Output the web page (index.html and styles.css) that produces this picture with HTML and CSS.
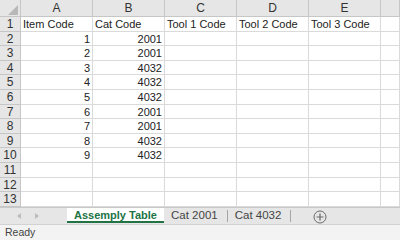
FILE: index.html
```html
<!DOCTYPE html>
<html lang="en">
<head>
  <meta charset="UTF-8" />
  <title>Assemply Table</title>
  <link rel="stylesheet" href="styles.css">
</head>
<body>
  <div class="sheet">
    <div class="cell corner"><span class="corner-mark"></span></div>
    <div class="cell col-head">A</div>
    <div class="cell col-head">B</div>
    <div class="cell col-head">C</div>
    <div class="cell col-head">D</div>
    <div class="cell col-head">E</div>
    <div class="cell col-head"></div>

    <div class="cell row-head">1</div>
    <div class="cell">Item Code</div>
    <div class="cell">Cat Code</div>
    <div class="cell">Tool 1 Code</div>
    <div class="cell">Tool 2 Code</div>
    <div class="cell">Tool 3 Code</div>
    <div class="cell"></div>

    <div class="cell row-head">2</div><div class="cell num">1</div><div class="cell num">2001</div><div class="cell"></div><div class="cell"></div><div class="cell"></div><div class="cell"></div>
    <div class="cell row-head">3</div><div class="cell num">2</div><div class="cell num">2001</div><div class="cell"></div><div class="cell"></div><div class="cell"></div><div class="cell"></div>
    <div class="cell row-head">4</div><div class="cell num">3</div><div class="cell num">4032</div><div class="cell"></div><div class="cell"></div><div class="cell"></div><div class="cell"></div>
    <div class="cell row-head">5</div><div class="cell num">4</div><div class="cell num">4032</div><div class="cell"></div><div class="cell"></div><div class="cell"></div><div class="cell"></div>
    <div class="cell row-head">6</div><div class="cell num">5</div><div class="cell num">4032</div><div class="cell"></div><div class="cell"></div><div class="cell"></div><div class="cell"></div>
    <div class="cell row-head">7</div><div class="cell num">6</div><div class="cell num">2001</div><div class="cell"></div><div class="cell"></div><div class="cell"></div><div class="cell"></div>
    <div class="cell row-head">8</div><div class="cell num">7</div><div class="cell num">2001</div><div class="cell"></div><div class="cell"></div><div class="cell"></div><div class="cell"></div>
    <div class="cell row-head">9</div><div class="cell num">8</div><div class="cell num">4032</div><div class="cell"></div><div class="cell"></div><div class="cell"></div><div class="cell"></div>
    <div class="cell row-head">10</div><div class="cell num">9</div><div class="cell num">4032</div><div class="cell"></div><div class="cell"></div><div class="cell"></div><div class="cell"></div>
    <div class="cell row-head">11</div><div class="cell"></div><div class="cell"></div><div class="cell"></div><div class="cell"></div><div class="cell"></div><div class="cell"></div>
    <div class="cell row-head">12</div><div class="cell"></div><div class="cell"></div><div class="cell"></div><div class="cell"></div><div class="cell"></div><div class="cell"></div>
    <div class="cell row-head">13</div><div class="cell"></div><div class="cell"></div><div class="cell"></div><div class="cell"></div><div class="cell"></div><div class="cell"></div>
  </div>

  <div class="tab-bar">
    <div class="tab-nav">
      <span class="arrow arrow-left"></span>
      <span class="arrow arrow-right"></span>
    </div>
    <div class="tab active">Assemply Table</div>
    <div class="tab">Cat 2001</div>
    <div class="tab">Cat 4032</div>
    <div class="add-sheet">
      <svg width="14" height="14" viewBox="0 0 14 14">
        <circle cx="7" cy="7" r="6" fill="none" stroke="#6a6a6a" stroke-width="1"/>
        <path d="M7 3.5v7M3.5 7h7" stroke="#6a6a6a" stroke-width="1.2"/>
      </svg>
    </div>
  </div>

  <div class="status-bar">Ready</div>
</body>
</html>
```

FILE: styles.css
```css
* {
  margin: 0;
  padding: 0;
  box-sizing: border-box;
}

body {
  width: 400px;
  height: 240px;
  overflow: hidden;
  background: #ffffff;
  font-family: 'Liberation Sans', Arial, sans-serif;
  color: #222222;
}

/* Grid */
.sheet {
  display: grid;
  grid-template-columns: 21px 72px 72px 72px 72px 72px 19px;
  grid-template-rows: 17px repeat(13, 14.6px);
  height: 207px;
}

.cell {
  border-right: 1px solid #dadada;
  border-bottom: 1px solid #dadada;
  font-size: 11px;
  line-height: 13px;
  padding: 1px 2px 0;
  white-space: nowrap;
  overflow: hidden;
}

.num {
  text-align: right;
}

.corner,
.col-head,
.row-head {
  background: #e6e6e6;
  border-color: #c6c6c6;
  color: #333333;
}

.col-head {
  text-align: center;
  font-size: 12px;
  line-height: 16px;
  padding: 0;
}

.row-head {
  text-align: center;
  font-size: 12px;
  padding: 0;
  line-height: 14px;
}

.corner {
  position: relative;
}

.corner-mark {
  position: absolute;
  right: 2px;
  bottom: 1px;
  width: 0;
  height: 0;
  border-left: 10px solid transparent;
  border-bottom: 10px solid #b8b8b8;
}

/* Sheet tabs */
.tab-bar {
  display: flex;
  align-items: flex-start;
  height: 18px;
  background: #e6e6e6;
  border-top: 1px solid #c8c8c8;
  border-bottom: 1px solid #d2d2d2;
}

.tab-nav {
  display: flex;
  gap: 14px;
  width: 67px;
  padding: 5px 0 0 17px;
}

.arrow {
  width: 0;
  height: 0;
  border-top: 3px solid transparent;
  border-bottom: 3px solid transparent;
}

.arrow-left {
  border-right: 4px solid #bdbdbd;
}

.arrow-right {
  border-left: 4px solid #bdbdbd;
}

.tab {
  font-size: 11.5px;
  color: #444444;
  padding: 0 9px 0 7px;
  height: 12px;
  margin-top: 2px;
  border-right: 1px solid #a6a6a6;
  line-height: 11px;
}

.tab.active {
  width: 97px;
  height: 15px;
  margin-top: 0;
  padding: 1px 0 0;
  text-align: center;
  background: #ffffff;
  color: #217346;
  font-weight: bold;
  font-size: 11px;
  line-height: 12px;
  border-right: none;
  border-bottom: 2px solid #217346;
}

.add-sheet {
  margin-left: 22px;
  padding-top: 2px;
  line-height: 0;
}

/* Status bar */
.status-bar {
  height: 15px;
  background: #f3f3f3;
  font-size: 10.5px;
  line-height: 14px;
  color: #444444;
  padding-left: 5px;
}
```
